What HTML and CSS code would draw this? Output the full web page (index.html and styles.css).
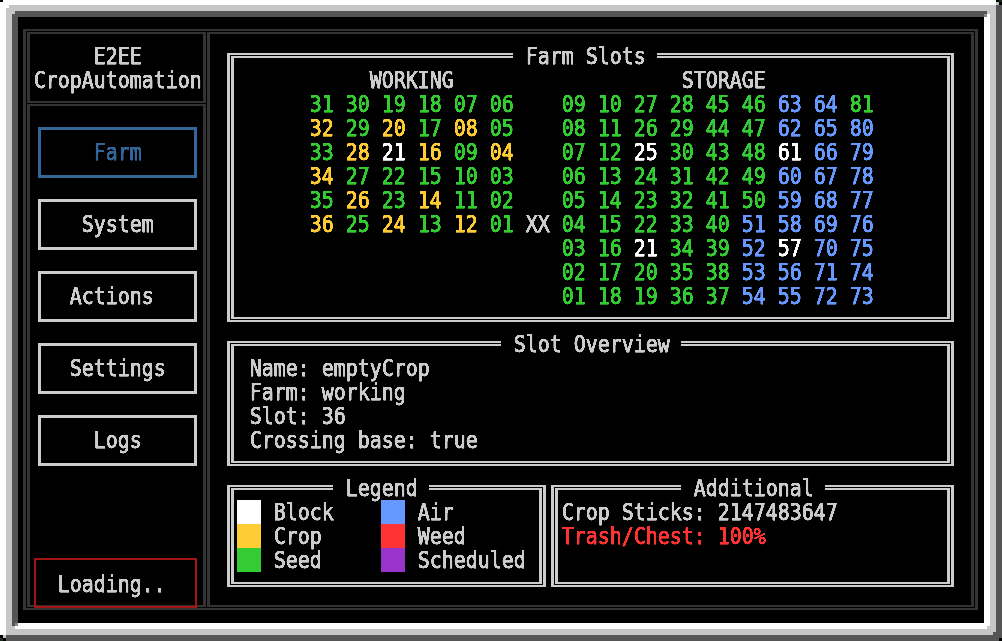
FILE: index.html
```html
<!DOCTYPE html>
<html lang="en">
<head>
<meta charset="utf-8">
<title>CropAutomation</title>
<link rel="stylesheet" href="styles.css">
</head>
<body>
<svg class="defs" width="0" height="0" aria-hidden="true">
  <filter id="crisp" color-interpolation-filters="sRGB" x="0" y="-0.2" width="1" height="1.4">
    <feComponentTransfer><feFuncA type="linear" slope="3" intercept="-0.9"/></feComponentTransfer>
  </filter>
</svg>
<div class="bezel"><div class="bezel-mid"><div class="screen">
<div class="frame">
  <header class="cell brand"><pre class="t brand-top">E2EE</pre><pre class="t">CropAutomation</pre></header>
  <nav class="cell side">
    <button class="btn active in4"><span class="t">Farm</span></button>
    <button class="btn in3"><span class="t">System</span></button>
    <button class="btn in2"><span class="t">Actions</span></button>
    <button class="btn in2"><span class="t">Settings</span></button>
    <button class="btn in4"><span class="t">Logs</span></button>
    <div class="status"><span class="t">Loading..</span></div>
  </nav>
  <main class="cell main">
    <section class="panel farm">
      <h2 class="title"><span class="t">Farm Slots</span></h2>
      <div class="plots">
        <div class="working">
          <pre class="t head-w">WORKING</pre>
<pre class="t g">31 30 19 18 07 06
<i class="y">32</i> 29 <i class="y">20</i> 17 <i class="y">08</i> 05
33 <i class="y">28</i> <i class="w">21</i> <i class="y">16</i> 09 <i class="y">04</i>
<i class="y">34</i> 27 22 15 10 03
35 <i class="y">26</i> 23 <i class="y">14</i> 11 02
<i class="y">36</i> 25 <i class="y">24</i> 13 <i class="y">12</i> 01 <i class="x">XX</i></pre>
        </div>
        <div class="storage">
          <pre class="t head-s">STORAGE</pre>
<pre class="t g">09 10 27 28 45 46 <i class="b">63 64</i> 81
08 11 26 29 44 47 <i class="b">62 65 80</i>
07 12 <i class="w">25</i> 30 43 48 <i class="w">61</i> <i class="b">66 79</i>
06 13 24 31 42 49 <i class="b">60 67 78</i>
05 14 23 32 41 50 <i class="b">59 68 77</i>
04 15 22 33 40 <i class="b">51 58 69 76</i>
03 16 <i class="w">21</i> 34 39 <i class="b">52</i> <i class="w">57</i> <i class="b">70 75</i>
02 17 20 35 38 <i class="b">53 56 71 74</i>
01 18 19 36 37 <i class="b">54 55 72 73</i></pre>
        </div>
      </div>
    </section>
    <section class="panel overview">
      <h2 class="title"><span class="t">Slot Overview</span></h2>
<pre class="t">Name: emptyCrop
Farm: working
Slot: 36
Crossing base: true</pre>
    </section>
    <div class="bottom">
      <section class="panel legend">
        <h2 class="title"><span class="t">Legend</span></h2>
        <div class="keys">
          <div class="key"><b class="sw white"></b><span class="t">Block</span></div>
          <div class="key"><b class="sw blue"></b><span class="t">Air</span></div>
          <div class="key"><b class="sw yellow"></b><span class="t">Crop</span></div>
          <div class="key"><b class="sw red"></b><span class="t">Weed</span></div>
          <div class="key"><b class="sw green"></b><span class="t">Seed</span></div>
          <div class="key"><b class="sw purple"></b><span class="t">Scheduled</span></div>
        </div>
      </section>
      <section class="panel extra">
        <h2 class="title"><span class="t">Additional</span></h2>
<pre class="t">Crop Sticks: 2147483647
<i class="r">Trash/Chest: 100%</i></pre>
      </section>
    </div>
  </main>
</div>
</div></div></div>
<svg class="corners" width="1002" height="641" viewBox="0 0 1002 641" shape-rendering="crispEdges" aria-hidden="true">
  <path fill="#000" d="M0 0h3v2h-3zM996 0h6v5h-6zM0 635h6v6h-6zM999 638h3v3h-3z"/>
  <path fill="#1c2b1c" d="M999 0h3v2h-3zM0 638h3v3h-3z"/>
  <path fill="#c6c6c6" d="M996 2h3v3h-3zM3 635h3v3h-3zM12 11h3v3h-3zM987 626h3v3h-3z"/>
  <path fill="#fff" d="M6 5h3v3h-3zM984 17h6v3h-6zM987 14h3v3h-3zM15 626h6v3h-6zM18 623h3v6h-3z"/>
  <path fill="#555" d="M993 632h3v3h-3zM981 11h6v3h-6zM981 14h3v3h-3zM12 620h6v3h-6zM12 623h3v3h-3z"/>
  <path fill="#c6c6c6" d="M987 11h3v3h-3zM12 626h3v3h-3z"/>
  <path fill="#888" d="M984 14h3v3h-3zM15 623h3v3h-3z"/>
</svg>
</body>
</html>
```
FILE: styles.css
```css
* { box-sizing: border-box; margin: 0; padding: 0; }
html, body { width: 1002px; height: 641px; overflow: hidden; background: #000; }
.defs { position: absolute; }
.corners { position: absolute; top: 0; left: 0; pointer-events: none; }

/* Terminal text: every character fills a 12x24 cell */
.t {
  display: block;
  width: max-content;
  font: 400 23.25px/24px "DejaVu Sans Mono", monospace;
  white-space: pre;
  transform: translate(0.7px, 0.4px) scaleX(0.857143);
  transform-origin: 0 0;
  -webkit-text-stroke: 0.75px currentColor;
  filter: url(#crisp);
}
i { font-style: normal; }

/* Bevelled monitor edge */
.bezel { height: 641px; border: 6px solid #555; border-top: 5px solid #fff; border-left-color: #fff; }
.bezel-mid { height: 100%; border: 6px solid #c6c6c6; }
.screen { height: 100%; border: 6px solid #fff; border-top-color: #555; border-left-color: #555; background: #000; padding: 12px 6px 13px 5px; }

.frame {
  height: 581px;
  border: solid #333;
  border-width: 2px 3px;
  padding: 1px;
  display: grid;
  grid-template: 71px 503px / 179px 767px;
  gap: 1px;
  color: #ccc;
}
.cell { border: solid #333; border-width: 2px 3px; }
.brand { padding: 10px 3px; }
.brand-top { margin-left: 60px; }

.side { padding: 21px 6px 0 8px; display: flex; flex-direction: column; gap: 21px; }
.btn { height: 51px; width: 159px; flex: none; border: 3px solid #ccc; background: none; color: #ccc; display: flex; align-items: flex-start; padding-top: 10px; }
.in4 { padding-left: 52px; }
.in3 { padding-left: 40px; }
.in2 { padding-left: 28px; }
.active { border-color: #369; color: #369; }
.status { width: 163px; height: 50px; margin: 71px 0 0 -4px; flex: none; border: 2px solid #a31515; padding: 12px 0 0 21px; }

.main { grid-area: 1 / 2 / 3 / 3; padding: 19px 17px 19px; display: flex; flex-direction: column; gap: 19px; }

/* Double-ruled box: outer line is the border, inner line the pseudo-element */
.panel { position: relative; border: solid #ccc; border-width: 2px 3px; }
.panel::before { content: ""; position: absolute; inset: 1px; border: solid #ccc; border-width: 2px 3px; }
.farm { height: 269px; }
.overview { height: 125px; padding: 13px 19px; }
.bottom { height: 101px; display: grid; grid-template-columns: 319px 403px; gap: 5px; }
.legend { padding: 13px 7px; }
.extra { padding: 13px 7px; }

.title { position: absolute; top: -11px; height: 24px; padding-left: 12px; background: #000; }
.farm .title { left: 283px; width: 144px; }
.overview .title { left: 271px; width: 180px; }
.legend .title { left: 103px; width: 96px; }
.extra .title { left: 127px; width: 144px; }

.plots { display: grid; grid-template-columns: 252px 1fr; padding: 13px 0 0 79px; }
.head-w { margin-left: 60px; }
.head-s { margin-left: 120px; }
.g { color: #3c3; }
.y { color: #fc3; }
.w { color: #fff; }
.b { color: #69f; }
.r { color: #f33; }
.x { color: #ccc; }

.keys { display: grid; grid-template: repeat(3, 24px) / 144px 1fr; }
.key { display: flex; gap: 12px; }
.sw { width: 24px; height: 24px; flex: none; }
.white { background: #fff; }
.yellow { background: #fc3; }
.green { background: #3c3; }
.blue { background: #69f; }
.red { background: #f33; }
.purple { background: #93c; }
```
